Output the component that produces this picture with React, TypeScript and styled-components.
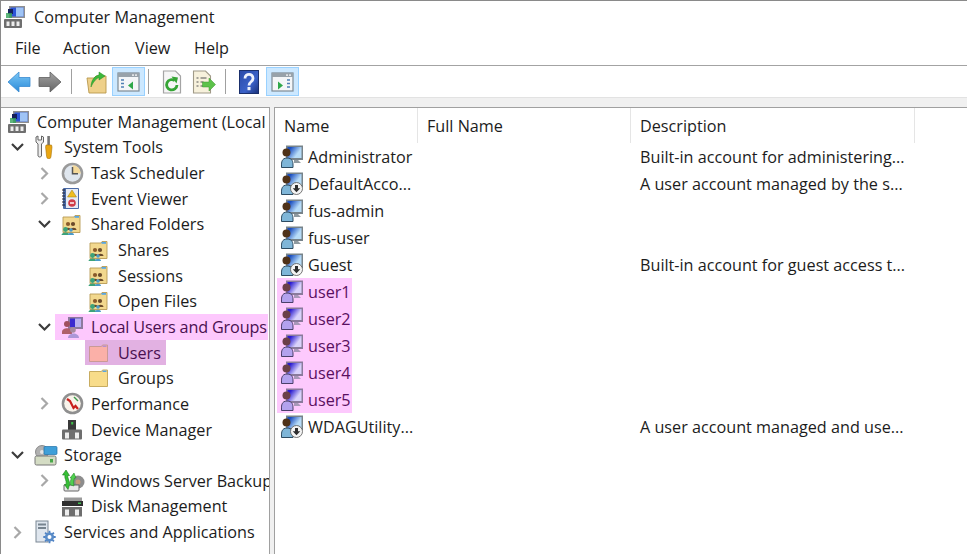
import React, { useId } from 'react';
import styled, { createGlobalStyle } from 'styled-components';

const GlobalStyle = createGlobalStyle`
  html, body {
    margin: 0;
    padding: 0;
    height: 100%;
    background: #fff;
  }
  body {
    font-family: "Open Sans", "Noto Sans", sans-serif;
    font-size: 16.2px;
    color: #1c1c1c;
    overflow: hidden;
  }
`;

const Window = styled.div`
  width: 967px;
  height: 554px;
  display: flex;
  flex-direction: column;
  box-sizing: border-box;
  border-left: 1px solid #8a8a8a;
  border-top: 1px solid #8a8a8a;
  overflow: hidden;
`;

const TitleBar = styled.div`
  height: 30px;
  padding: 1px 0 1px 2px;
  display: flex;
  align-items: center;
  gap: 8px;
  flex: none;
`;

const MenuBar = styled.div`
  height: 30px;
  padding-bottom: 2px;
  display: flex;
  align-items: center;
  padding-left: 14px;
  flex: none;
  border-bottom: 1px solid #a3a3a3;
`;

const MenuItem = styled.span<{ $w: number }>`
  width: ${(p) => p.$w}px;
`;

const Toolbar = styled.div`
  height: 31px;
  display: flex;
  align-items: center;
  padding-left: 4px;
  flex: none;
`;

const ToolButton = styled.div<{ $w: number; $on?: boolean }>`
  width: ${(p) => p.$w}px;
  height: 29px;
  box-sizing: border-box;
  display: flex;
  align-items: center;
  justify-content: center;
  background: ${(p) => (p.$on ? '#cce8ff' : 'transparent')};
  border: 1px solid ${(p) => (p.$on ? '#99d1ff' : 'transparent')};
`;

const ToolSep = styled.div<{ $l: number; $r: number }>`
  width: 1px;
  height: 25px;
  background: #a0a0a0;
  margin: 0 ${(p) => p.$r}px 0 ${(p) => p.$l}px;
`;

const Panes = styled.div`
  flex: 1;
  min-height: 0;
  display: flex;
  gap: 4px;
  background: #f0f0f0;
  padding-top: 9px;
  border-top: 1px solid #e2e2e2;
`;

const TreePane = styled.div`
  width: 269px;
  flex: none;
  box-sizing: border-box;
  background: #fff;
  border-top: 1px solid #a0a0a0;
  border-right: 1px solid #a0a0a0;
  padding-top: 1px;
  overflow: hidden;
`;

const TreeRow = styled.div<{ $level: number }>`
  height: 25.65px;
  display: flex;
  align-items: center;
  white-space: nowrap;
  padding-left: ${(p) => (p.$level === 0 ? 0 : 4 + (p.$level - 1) * 27)}px;
`;

const Twist = styled.div`
  width: 23px;
  flex: none;
  box-sizing: border-box;
  padding-left: 2px;
  display: flex;
  justify-content: center;
`;

const TreeItem = styled.div<{ $mark?: 'group' | 'selected' }>`
  height: 100%;
  display: flex;
  align-items: center;
  padding-left: ${(p) => (p.$mark === 'selected' ? 3 : 6)}px;
  padding-right: ${(p) => (p.$mark === 'selected' ? 5 : 1)}px;
  margin-left: ${(p) => (p.$mark === 'selected' ? 3 : 0)}px;
  color: ${(p) => (p.$mark ? '#4a1050' : 'inherit')};
  letter-spacing: ${(p) => (p.$mark === 'group' ? '-0.15px' : 'normal')};
  background: ${(p) =>
    p.$mark === 'group' ? '#fdc8fd' : p.$mark === 'selected' ? '#e2b1e2' : 'transparent'};
`;

const TreeIcon = styled.span`
  width: 30px;
  flex: none;
  display: flex;
  align-items: center;
`;

const ListPane = styled.div`
  flex: 1;
  background: #fff;
  border-top: 1px solid #a0a0a0;
  border-left: 1px solid #a0a0a0;
  overflow: hidden;
`;

const Columns = styled.div`
  display: grid;
  grid-template-columns: 143px 213px 284px;
`;

const HeaderCell = styled.div`
  height: 35px;
  box-sizing: border-box;
  display: flex;
  align-items: center;
  padding-left: 9px;
  border-right: 1px solid #e5e5e5;
`;

const ListCell = styled.div`
  height: 27px;
  display: flex;
  align-items: center;
  white-space: nowrap;
  overflow: hidden;
  padding-left: 9px;
`;

const NameCell = styled.div`
  height: 27px;
  display: flex;
  align-items: center;
  white-space: nowrap;
  padding-left: 2px;
`;

const NameChip = styled.div<{ $mark?: boolean }>`
  height: 100%;
  width: 136px;
  display: flex;
  align-items: center;
  padding-left: 4px;
  box-sizing: border-box;
  ${(p) => p.$mark && 'width: 75px; background: #fdc9fd; color: #5a1060;'}
`;

const ListIcon = styled.span`
  width: 27px;
  flex: none;
  display: flex;
  align-items: center;
`;

/* ---- icons ---- */

function ComputerIcon() {
  return (
    <svg width="23" height="24" viewBox="0 0 23 24">
      <rect x="6" y="1" width="16" height="12" fill="#8f8f8f" />
      <rect x="7.5" y="2.500" width="13" height="9" fill="#2d55d8" />
      <rect x="13" y="2.500" width="7.500" height="9" fill="#9fc4f5" />
      <path d="M5 4h5v5H5z" fill="#15205c" />
      <path d="M3 8h6v5H3z" fill="#35a35a" opacity=".8" />
      <rect x="1" y="14" width="18" height="9" rx="1" fill="#6f6f6f" />
      <rect x="3.500" y="16.500" width="3" height="4.500" fill="#eee" />
      <rect x="8.500" y="16.500" width="3" height="4.500" fill="#eee" />
      <rect x="13.500" y="16.500" width="3" height="4.500" fill="#eee" />
    </svg>
  );
}

function Chevron({ open }: { open: boolean }) {
  return open ? (
    <svg width="15" height="10" viewBox="0 0 15 10">
      <path d="M2 2l5.500 5.500L13 2" fill="none" stroke="#3c3c3c" strokeWidth="2.200" />
    </svg>
  ) : (
    <svg width="11" height="15" viewBox="0 0 11 15">
      <path d="M2.500 2l5.500 5.500-5.500 5.500" fill="none" stroke="#a8a8a8" strokeWidth="2.200" />
    </svg>
  );
}

function ToolsIcon() {
  return (
    <svg width="20" height="24" viewBox="0 0 20 24">
      <path d="M2 2v5l2 2v12a2 2 0 0 0 3.500 0V9l2-2V2L7.500 1v4H4V1z" fill="#ececec" stroke="#666" strokeWidth="1" />
      <rect x="13.300" y="1" width="2.600" height="9" fill="#777" />
      <path d="M12 10h5.500l.5 2-1 9.500a2.200 2.200 0 0 1-4.400 0l-1-9.500z" fill="#eaa612" stroke="#a87408" strokeWidth=".6" />
    </svg>
  );
}

function ClockIcon() {
  return (
    <svg width="23" height="23" viewBox="0 0 23 23">
      <circle cx="11.500" cy="11.500" r="10.800" fill="#9a9a9a" />
      <circle cx="11.500" cy="11.500" r="8.300" fill="#dfe6ee" />
      <path d="M11.500 3.200a8.300 8.300 0 0 1 8.300 8.300h-8.300z" fill="#f4d99a" />
      <path d="M11.500 5v6.800h5.500" fill="none" stroke="#555" strokeWidth="1.500" />
    </svg>
  );
}

function LogIcon() {
  return (
    <svg width="20" height="23" viewBox="0 0 20 23">
      <rect x="2" y="1" width="16" height="21" rx="1" fill="#4a6aa6" />
      <rect x="5" y="2" width="12" height="19" fill="#e6ebf4" />
      <path d="M1 3h3M1 6h3M1 9h3M1 12h3M1 15h3M1 18h3" stroke="#223" strokeWidth="1" />
      <path d="M11 3l4.500 7h-9z" fill="#f0bd1e" stroke="#9a7a10" strokeWidth=".5" />
      <circle cx="11" cy="16" r="3.800" fill="#cf3c48" />
      <rect x="9" y="15.300" width="4" height="1.400" fill="#fff" />
    </svg>
  );
}

function SharedFolderIcon() {
  return (
    <svg width="21" height="21" viewBox="0 0 21 21">
      <path d="M2 3h11l1-1.500h5v17H2z" fill="#f2d88e" stroke="#b89b55" strokeWidth=".9" />
      <rect x="13.500" y="2" width="4.500" height="1.800" fill="#5aa6e0" />
      <circle cx="7" cy="10" r="2.100" fill="#8a5a2a" />
      <circle cx="12" cy="10" r="2.100" fill="#6a4a2a" />
      <path d="M4 16c0-3 6-3 6 0zM9.500 16c0-3 6-3 6 0z" fill="#6a4a2a" />
      <circle cx="4.500" cy="15.500" r="2.400" fill="#3ca27a" />
      <path d="M0.500 21c0-3.500 8-3.500 8 0z" fill="#3ca27a" />
      <circle cx="10" cy="16" r="1.800" fill="#4a9ac8" />
      <path d="M7 21c0-3 6-3 6 0z" fill="#4a9ac8" />
    </svg>
  );
}

function FolderIcon({ pink }: { pink?: boolean }) {
  return (
    <svg width="21" height="20" viewBox="0 0 21 20">
      <path
        d="M1.500 3.500h12l1-1.500h5v16.500h-18z"
        fill={pink ? '#fbb0a8' : '#f8dc8a'}
        stroke={pink ? '#c99a96' : '#c8ac60'}
        strokeWidth="1"
      />
      <rect x="14.500" y="2.500" width="4" height="1.500" fill={pink ? '#b58fd0' : '#5aa6e0'} />
    </svg>
  );
}

function LocalUsersIcon() {
  return (
    <svg width="23" height="23" viewBox="0 0 23 23">
      <rect x="7" y="2" width="15" height="12" fill="#8d7a9d" />
      <rect x="9" y="3.500" width="11" height="8.500" fill="#3a2ad0" />
      <rect x="14" y="3.500" width="6" height="8.500" fill="#b9b0f0" />
      <circle cx="6" cy="9" r="3" fill="#a0505e" />
      <path d="M1 17c0-5 10-5 10 0v2H1z" fill="#b0606a" />
      <circle cx="12" cy="15" r="2.800" fill="#a68aa0" />
      <path d="M7 23c0-6 11-6 11 0z" fill="#ad96d8" />
    </svg>
  );
}

function PerfIcon() {
  return (
    <svg width="23" height="23" viewBox="0 0 23 23">
      <circle cx="11.500" cy="11.500" r="10.800" fill="#8f8f8f" />
      <circle cx="11.500" cy="11.500" r="8.300" fill="#f8f3ea" />
      <path d="M6 7l3 2 3.500 7 2-2 2.500 3" fill="none" stroke="#c8201c" strokeWidth="2.200" />
      <path d="M13 5l4 4" stroke="#3a9a4a" strokeWidth="1.500" />
    </svg>
  );
}

function DeviceIcon() {
  return (
    <svg width="22" height="21" viewBox="0 0 22 21">
      <rect x="7" y="1" width="8" height="11" fill="#3a3a3a" />
      <rect x="10.200" y="3" width="2" height="2.500" fill="#3ec04a" />
      <rect x="1" y="10.500" width="20" height="10" rx="1" fill="#6e6e6e" />
      <rect x="4" y="13.500" width="4" height="6" fill="#eee" />
      <rect x="14" y="13.500" width="4" height="6" fill="#eee" />
    </svg>
  );
}

function StorageIcon() {
  return (
    <svg width="24" height="23" viewBox="0 0 24 23">
      <circle cx="8" cy="8" r="6.500" fill="#b0b0b0" stroke="#777" strokeWidth=".8" />
      <circle cx="8" cy="8" r="2" fill="#e4e4e4" />
      <rect x="10" y="2.500" width="13" height="8" rx="1" fill="#3f9fd8" stroke="#2070a8" strokeWidth=".7" />
      <rect x="1" y="12" width="21" height="9" rx="1.500" fill="#d4dcc4" stroke="#777" strokeWidth="1" />
      <rect x="16" y="15" width="3" height="3.500" fill="#4aa84a" />
    </svg>
  );
}

function BackupIcon() {
  return (
    <svg width="24" height="24" viewBox="0 0 24 24">
      <circle cx="17" cy="13" r="6.500" fill="#8d8d8d" />
      <circle cx="17" cy="13" r="2.500" fill="#c89a7a" />
      <path d="M3 16h15v5a1 1 0 0 1-1 1H4a1 1 0 0 1-1-1z" fill="#e8e8e8" stroke="#666" strokeWidth="1" />
      <path d="M5 1l3.500 5.500H7c-1 3 3 6 1 11l-1 3-3.500-5H5c1-4-2-6-1-9.500H1.500z" fill="#36c036" stroke="#1a7a1a" strokeWidth=".6" />
      <path d="M13 4l2 5h-1.500c-1 3-1 5-.5 8l-3.500-1c-.5-3 0-5 1-7H9z" fill="#4fd04f" stroke="#1a7a1a" strokeWidth=".5" />
    </svg>
  );
}

function DiskIcon() {
  return (
    <svg width="23" height="21" viewBox="0 0 23 21">
      <rect x="3" y="1.500" width="18" height="3.500" fill="#9a9a9a" />
      <rect x="1" y="5" width="21" height="5" fill="#2f2f2f" />
      <rect x="17" y="6.500" width="3" height="1.500" fill="#40c050" />
      <rect x="1" y="11" width="20" height="9.500" fill="#6e6e6e" />
      <rect x="4" y="13.500" width="4" height="6" fill="#eee" />
      <rect x="14" y="13.500" width="4" height="6" fill="#eee" />
    </svg>
  );
}

function ServicesIcon() {
  return (
    <svg width="22" height="24" viewBox="0 0 22 24">
      <rect x="2" y="1" width="12" height="21" fill="#dfe6ee" stroke="#7b8794" strokeWidth="1" />
      <rect x="4" y="3.500" width="8" height="2" fill="#77848f" />
      <rect x="4" y="7" width="8" height="2" fill="#77848f" />
      <path d="M15.500 10.800v12.400M9.300 17h12.400M11.100 12.600l8.800 8.800M19.900 12.600l-8.800 8.800" stroke="#4f82c4" strokeWidth="1.800" />
      <circle cx="15.500" cy="17" r="4.600" fill="#5a8cc8" />
      <circle cx="15.500" cy="17" r="2" fill="#fff" />
    </svg>
  );
}

// user on a monitor, the pink version sits under the highlight
function UserIcon({ pink, down }: { pink?: boolean; down?: boolean }) {
  const id = useId();
  const light = pink ? '#d9d2fb' : '#b7dcf8';
  const dark = pink ? '#2a1bd0' : '#1b4fc0';
  const body = pink ? '#b3a2ee' : '#7fb6d8';
  return (
    <svg width="22" height="23" viewBox="0 0 22 23">
      <defs>
        <linearGradient id={id} x1="0" y1="0" x2="1" y2="0.600">
          <stop offset="0.200" stopColor={dark} />
          <stop offset="0.800" stopColor={light} />
        </linearGradient>
      </defs>
      <rect x="5" y="0.500" width="17" height="14.500" fill={pink ? '#8a7a9c' : '#77838a'} />
      <rect x="6.500" y="2" width="14" height="11" fill={`url(#${id})`} />
      <path d="M13 15h4l3 3h-7z" fill={pink ? '#a898b8' : '#8f9aa0'} />
      <circle cx="5.500" cy="7.500" r="4" fill={pink ? '#6b4048' : '#4f3218'} />
      <path d="M0.500 20c0-2 0-7 5.500-7s6 4 6 7v2.500H0.500z" fill={body} stroke={pink ? '#4a3f6a' : '#2e4c62'} strokeWidth="1" />
      {down && (
        <>
          <circle cx="15.500" cy="16.500" r="6" fill="#f4f4f4" stroke="#555" strokeWidth=".8" />
          <path d="M14 13h3v3.200h2.300l-3.800 4-3.800-4H14z" fill="#2e2e2e" />
        </>
      )}
    </svg>
  );
}

function BackIcon({ forward }: { forward?: boolean }) {
  const id = useId();
  return (
    <svg width="24" height="22" viewBox="0 0 24 22">
      <defs>
        <linearGradient id={id} x1="0" y1="0" x2="0" y2="1">
          <stop offset="0" stopColor={forward ? '#a2a2a2' : '#7cc8f6'} />
          <stop offset="1" stopColor={forward ? '#666' : '#2a8ad8'} />
        </linearGradient>
      </defs>
      <path
        d={forward ? 'M1 6.500h11V1l11 10-11 10v-5.500H1z' : 'M23 6.500H12V1L1 11l11 10v-5.500h11z'}
        fill={`url(#${id})`}
        stroke={forward ? '#5e5e5e' : '#3a8ad0'}
        strokeWidth=".8"
      />
    </svg>
  );
}

function UpFolderIcon() {
  return (
    <svg width="22" height="24" viewBox="0 0 22 24">
      <path d="M2 8h7l2-2h10v17H4z" fill="#eed08a" stroke="#b8974c" strokeWidth=".9" />
      <path d="M6 17c0-6 3-11 8-12V2l6 4-6 4V7.500c-3 1-6 5-8 9.500z" fill="#3cb83c" stroke="#1f8a1f" strokeWidth=".5" />
    </svg>
  );
}

function PaneIcon({ right }: { right?: boolean }) {
  const listX = right ? 16 : 4;
  const arrow = right ? 'M7 9.500l5 4-5 4z' : 'M16 9.500l-5 4 5 4z';
  return (
    <svg width="23" height="20" viewBox="0 0 23 20">
      <rect x="1" y="1" width="21" height="18" fill="#f4f6f8" stroke="#7d8a94" strokeWidth="1.200" />
      <rect x="1" y="1" width="21" height="4" fill="#98a2aa" />
      <rect x="15" y="2.500" width="2" height="1.200" fill="#fff" />
      <rect x="18" y="2.500" width="2" height="1.200" fill="#fff" />
      <path d={`M${listX} 8h3M${listX} 11.500h3M${listX} 15h3`} stroke="#4f80b4" strokeWidth="1.500" />
      <path d={arrow} fill="#2fa84a" />
    </svg>
  );
}

function RefreshIcon() {
  return (
    <svg width="20" height="24" viewBox="0 0 20 24">
      <path d="M1.500 1h12l5 5v17h-17z" fill="#f6f6f6" stroke="#a4a4a4" strokeWidth="1.200" />
      <path d="M15 15a5.200 5.200 0 1 1-2.200-4.500" fill="none" stroke="#35a535" strokeWidth="2.800" />
      <path d="M9.500 6.500l6.500 1-1.500 6z" fill="#35a535" />
    </svg>
  );
}

function ExportIcon() {
  return (
    <svg width="24" height="24" viewBox="0 0 24 24">
      <path d="M1.500 1h12l5 5v17h-17z" fill="#f7f1dc" stroke="#a09a88" strokeWidth="1.100" />
      <path d="M4.500 8h2M8.500 8h6M4.500 12h2M8.500 12h3M4.500 16h2M8.500 16h3" stroke="#555" strokeWidth="1.200" />
      <path d="M10.500 12h6.500V8l6.500 6.500-6.500 6.500v-4h-6.500z" fill="#5cc24a" stroke="#3a9430" strokeWidth=".5" />
    </svg>
  );
}

function HelpIcon() {
  const id = useId();
  return (
    <svg width="20" height="24" viewBox="0 0 20 24">
      <defs>
        <linearGradient id={id} x1="0" y1="0" x2="1" y2="1">
          <stop offset="0" stopColor="#2a4aa8" />
          <stop offset="0.600" stopColor="#3b62c8" />
          <stop offset="1" stopColor="#1a3078" />
        </linearGradient>
      </defs>
      <rect x="0.500" y="0.500" width="19" height="23" fill={`url(#${id})`} stroke="#1a2f6c" strokeWidth="1" />
      <path d="M6 8.500c0-5.500 8-5.500 8 0 0 3.500-4 3-4 7" fill="none" stroke="#eef2fc" strokeWidth="2.800" />
      <rect x="8.500" y="17" width="3" height="3.200" fill="#eef2fc" />
    </svg>
  );
}

const tree: { level: number; open?: boolean; icon: React.ReactNode; label: string; mark?: 'group' | 'selected' }[] = [
  { level: 0, icon: <ComputerIcon />, label: 'Computer Management (Local' },
  { level: 1, open: true, icon: <ToolsIcon />, label: 'System Tools' },
  { level: 2, open: false, icon: <ClockIcon />, label: 'Task Scheduler' },
  { level: 2, open: false, icon: <LogIcon />, label: 'Event Viewer' },
  { level: 2, open: true, icon: <SharedFolderIcon />, label: 'Shared Folders' },
  { level: 3, icon: <SharedFolderIcon />, label: 'Shares' },
  { level: 3, icon: <SharedFolderIcon />, label: 'Sessions' },
  { level: 3, icon: <SharedFolderIcon />, label: 'Open Files' },
  { level: 2, open: true, icon: <LocalUsersIcon />, label: 'Local Users and Groups', mark: 'group' },
  { level: 3, icon: <FolderIcon pink />, label: 'Users', mark: 'selected' },
  { level: 3, icon: <FolderIcon />, label: 'Groups' },
  { level: 2, open: false, icon: <PerfIcon />, label: 'Performance' },
  { level: 2, icon: <DeviceIcon />, label: 'Device Manager' },
  { level: 1, open: true, icon: <StorageIcon />, label: 'Storage' },
  { level: 2, open: false, icon: <BackupIcon />, label: 'Windows Server Backup' },
  { level: 2, icon: <DiskIcon />, label: 'Disk Management' },
  { level: 1, open: false, icon: <ServicesIcon />, label: 'Services and Applications' },
];

const users: { name: string; desc?: string; down?: boolean; pink?: boolean }[] = [
  { name: 'Administrator', desc: 'Built-in account for administering...' },
  { name: 'DefaultAcco...', desc: 'A user account managed by the s...', down: true },
  { name: 'fus-admin' },
  { name: 'fus-user' },
  { name: 'Guest', desc: 'Built-in account for guest access t...', down: true },
  { name: 'user1', pink: true },
  { name: 'user2', pink: true },
  { name: 'user3', pink: true },
  { name: 'user4', pink: true },
  { name: 'user5', pink: true },
  { name: 'WDAGUtility...', desc: 'A user account managed and use...', down: true },
];

export default function App() {
  return (
    <>
      <GlobalStyle />
      <Window>
        <TitleBar>
          <ComputerIcon />
          <span>Computer Management</span>
        </TitleBar>
        <MenuBar>
          <MenuItem $w={48}>File</MenuItem>
          <MenuItem $w={72}>Action</MenuItem>
          <MenuItem $w={59}>View</MenuItem>
          <MenuItem $w={50}>Help</MenuItem>
        </MenuBar>
        <Toolbar>
          <ToolButton $w={28}><BackIcon /></ToolButton>
          <ToolButton $w={33}><BackIcon forward /></ToolButton>
          <ToolSep $l={5} $r={7} />
          <ToolButton $w={33}><UpFolderIcon /></ToolButton>
          <ToolButton $w={33} $on><PaneIcon /></ToolButton>
          <ToolSep $l={3} $r={8} />
          <ToolButton $w={30}><RefreshIcon /></ToolButton>
          <ToolButton $w={34}><ExportIcon /></ToolButton>
          <ToolSep $l={4} $r={5} />
          <ToolButton $w={35}><HelpIcon /></ToolButton>
          <ToolButton $w={33} $on><PaneIcon right /></ToolButton>
        </Toolbar>
        <Panes>
          <TreePane>
            {tree.map((n) => (
              <TreeRow key={n.label} $level={n.level}>
                {n.level > 0 && (
                  <Twist>{n.open !== undefined && <Chevron open={n.open} />}</Twist>
                )}
                <TreeItem $mark={n.mark}>
                  <TreeIcon>{n.icon}</TreeIcon>
                  <span>{n.label}</span>
                </TreeItem>
              </TreeRow>
            ))}
          </TreePane>
          <ListPane>
            <Columns>
              <HeaderCell>Name</HeaderCell>
              <HeaderCell>Full Name</HeaderCell>
              <HeaderCell>Description</HeaderCell>
            </Columns>
            {users.map((u) => (
              <Columns key={u.name}>
                <NameCell>
                  <NameChip $mark={u.pink}>
                    <ListIcon><UserIcon pink={u.pink} down={u.down} /></ListIcon>
                    <span>{u.name}</span>
                  </NameChip>
                </NameCell>
                <ListCell />
                <ListCell>{u.desc}</ListCell>
              </Columns>
            ))}
          </ListPane>
        </Panes>
      </Window>
    </>
  );
}
